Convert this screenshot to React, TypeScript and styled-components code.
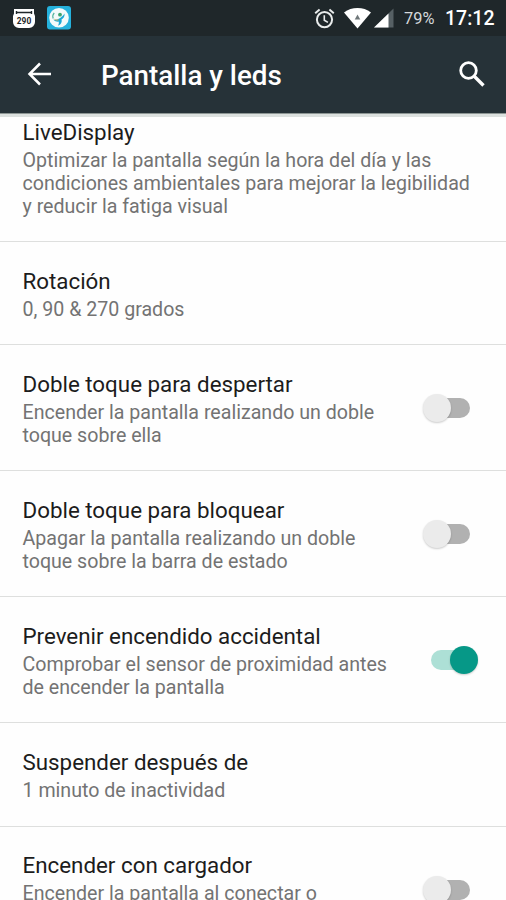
import React from "react";
import styled, { createGlobalStyle } from "styled-components";

const Global = createGlobalStyle`
  * { box-sizing: border-box; }
  body { margin: 0; background: #fefefe; font-family: Roboto, sans-serif; }
`;

const Screen = styled.div`
  width: 506px;
  height: 900px;
  overflow: hidden;
  display: flex;
  flex-direction: column;
  background: #fefefe;
`;

const StatusBar = styled.div`
  height: 36px;
  flex: none;
  display: flex;
  align-items: center;
  background: #1f272a;
  color: #fff;
  padding: 0 11px 0 12px;
`;

const StatusIcon = styled.svg<{ $gap: number }>`
  display: block;
  flex: none;
  margin-right: ${(p) => p.$gap}px;
`;

const Spacer = styled.div`
  flex: 1;
`;

const Battery = styled.span`
  font-size: 16.4px;
  width: 41px;
  padding-top: 1px;
  white-space: nowrap;
  color: #d4d8da;
`;

const Clock = styled.span`
  width: 50px;
  font-size: 19.5px;
  font-weight: 500;
  padding-top: 1px;
  white-space: nowrap;
`;

const AppBar = styled.header`
  height: 77px;
  flex: none;
  display: flex;
  align-items: center;
  background: #263238;
  padding: 0 20px 0 27px;
  box-shadow: 0 1px 0 #8d9694, 0 4px 0 #dce1df;
  position: relative;
  z-index: 1;
`;

const BarIcon = styled.svg`
  display: block;
  flex: none;
  margin-bottom: 2px;
`;

const Title = styled.h1`
  margin: 2px 0 0 48px;
  flex: 1;
  font-size: 27.8px;
  font-weight: 500;
  color: #fff;
`;

const List = styled.main`
  flex: 1;
  overflow: hidden;
`;

const Row = styled.section<{ $height: number; $top: number }>`
  height: ${(p) => p.$height}px;
  padding: 0 27px 0 22.5px;
  border-bottom: 1px solid #dedfde;
  display: flex;
  align-items: center;
  justify-content: space-between;

  & > :first-child {
    align-self: flex-start;
    padding-top: ${(p) => p.$top}px;
  }
`;

const Name = styled.div`
  font-size: 22.35px;
  line-height: 28px;
  color: #1c1c1c;
  white-space: nowrap;
`;

const Summary = styled.div`
  font-size: 19.63px;
  line-height: 23px;
  margin-top: 3px;
  color: #737373;
  white-space: pre;
`;

const Toggle = styled.div<{ $on?: boolean }>`
  flex: none;
  width: 39px;
  height: 20px;
  margin-right: 9px;
  border-radius: 10px;
  background: ${(p) => (p.$on ? "#ade0d6" : "#b1b1b1")};
  display: flex;
  align-items: center;
  justify-content: ${(p) => (p.$on ? "flex-end" : "flex-start")};
`;

const Knob = styled.div<{ $on?: boolean }>`
  flex: none;
  width: 28px;
  height: 28px;
  margin: 0 -8px;
  border-radius: 50%;
  background: ${(p) => (p.$on ? "#069887" : "#ebebeb")};
  box-shadow: 0 1px 2px rgba(0, 0, 0, 0.2);
`;

type Setting = {
  name: string;
  summary: string;
  height: number;
  top?: number;
  toggle?: "on" | "off";
};

const settings: Setting[] = [
  {
    name: "LiveDisplay",
    summary:
      "Optimizar la pantalla según la hora del día y las\ncondiciones ambientales para mejorar la legibilidad\ny reducir la fatiga visual",
    height: 129,
    top: 5,
  },
  { name: "Rotación", summary: "0, 90 & 270 grados", height: 103 },
  {
    name: "Doble toque para despertar",
    summary: "Encender la pantalla realizando un doble\ntoque sobre ella",
    height: 126,
    toggle: "off",
  },
  {
    name: "Doble toque para bloquear",
    summary: "Apagar la pantalla realizando un doble\ntoque sobre la barra de estado",
    height: 126,
    toggle: "off",
  },
  {
    name: "Prevenir encendido accidental",
    summary: "Comprobar el sensor de proximidad antes\nde encender la pantalla",
    height: 126,
    toggle: "on",
  },
  { name: "Suspender después de", summary: "1 minuto de inactividad", height: 104 },
  {
    name: "Encender con cargador",
    summary: "Encender la pantalla al conectar o",
    height: 126,
    top: 24,
    toggle: "off",
  },
];

const CounterIcon = () => (
  <StatusIcon $gap={11} width="24" height="24" viewBox="0 0 24 24">
    <path d="M2 3h20v4.500l1 2.500v6a6 6 0 0 1-6 6H7a6 6 0 0 1-6-6v-6l1-2.500z" fill="#fff" />
    <path d="M4 6.500h16M4.500 5v3M19.500 5v3" stroke="#1f272a" strokeWidth="1.400" />
    <text x="12" y="17.600" textAnchor="middle" fontFamily="Roboto" fontSize="8.400" fontWeight="700" fill="#1f272a">
      290
    </text>
  </StatusIcon>
);

const AppIcon = () => (
  <StatusIcon $gap={0} width="24" height="24" viewBox="0 0 24 24">
    <rect width="24" height="23.500" rx="3" fill="#25b1dc" />
    <circle cx="12" cy="11.700" r="9.800" fill="#f3fafa" />
    <path d="M17.500 7.500c.4 3-1 5-3 6 .8 2.500-.6 5.200-3.600 6.300 1-1.600 1.200-3 .7-4.200-2 .2-4-.6-5.300-2.200 2 .5 4 .3 5.500-.7 2.400-1.200 4.200-2.700 5.700-5.200z" fill="#1ba8d6" />
    <circle cx="13" cy="8.700" r="1.900" fill="#3da36d" />
    <path d="M7.200 6.800C5.700 8.600 5.500 10.600 6.200 12.400" stroke="#58b5a0" strokeWidth="1.300" fill="none" />
    <path d="M7.600 13.300c1.200.8 2.600 1 4 .6" stroke="#e4b14d" strokeWidth="1" fill="none" />
  </StatusIcon>
);

const AlarmIcon = () => (
  <StatusIcon $gap={9} width="21" height="21" viewBox="0 0 21 21" fill="none" stroke="#e9ecec">
    <circle cx="10.500" cy="11.600" r="7.600" strokeWidth="2" />
    <path d="M10.300 7.200v5l3.600 2.200" strokeWidth="1.600" />
    <path d="M1.200 5.200 5.600 1.500M19.800 5.200l-4.400-3.700" strokeWidth="2" />
  </StatusIcon>
);

const WifiIcon = () => (
  <StatusIcon $gap={3} width="27" height="21" viewBox="0 0 27 21">
    <path d="M0 4.600C4 1.200 8.500 0 13.500 0S23 1.200 27 4.600L13.500 20.500z" fill="#fff" />
    <path d="M13.500 6.500 16.300 11.500h-5.600z" fill="#6f7779" />
  </StatusIcon>
);

const SignalIcon = () => (
  <StatusIcon $gap={10} width="20" height="21" viewBox="0 0 20 21">
    <path d="M19.500 .5v19H0z" fill="#566064" />
    <path d="M14.500 5.400V19.500H0z" fill="#fff" />
  </StatusIcon>
);

export default function App() {
  return (
    <Screen>
      <Global />
      <StatusBar>
        <CounterIcon />
        <AppIcon />
        <Spacer />
        <AlarmIcon />
        <WifiIcon />
        <SignalIcon />
        <Battery>79%</Battery>
        <Clock>17:12</Clock>
      </StatusBar>
      <AppBar>
        <BarIcon width="26" height="26" viewBox="0 0 26 26" fill="none" stroke="#fff" strokeWidth="2.500">
          <path d="M24 13H3M13 2.500 2.500 13 13 23.500" />
        </BarIcon>
        <Title>Pantalla y leds</Title>
        <BarIcon width="28" height="28" viewBox="0 0 28 28" fill="none" stroke="#fff">
          <circle cx="10.500" cy="10.500" r="7.800" strokeWidth="2.800" />
          <path d="M16 16l9.500 9.500" strokeWidth="3.300" />
        </BarIcon>
      </AppBar>
      <List>
        {settings.map((s) => (
          <Row key={s.name} $height={s.height} $top={s.top ?? 25}>
            <div>
              <Name>{s.name}</Name>
              <Summary>{s.summary}</Summary>
            </div>
            {s.toggle && (
              <Toggle $on={s.toggle === "on"}>
                <Knob $on={s.toggle === "on"} />
              </Toggle>
            )}
          </Row>
        ))}
      </List>
    </Screen>
  );
}
